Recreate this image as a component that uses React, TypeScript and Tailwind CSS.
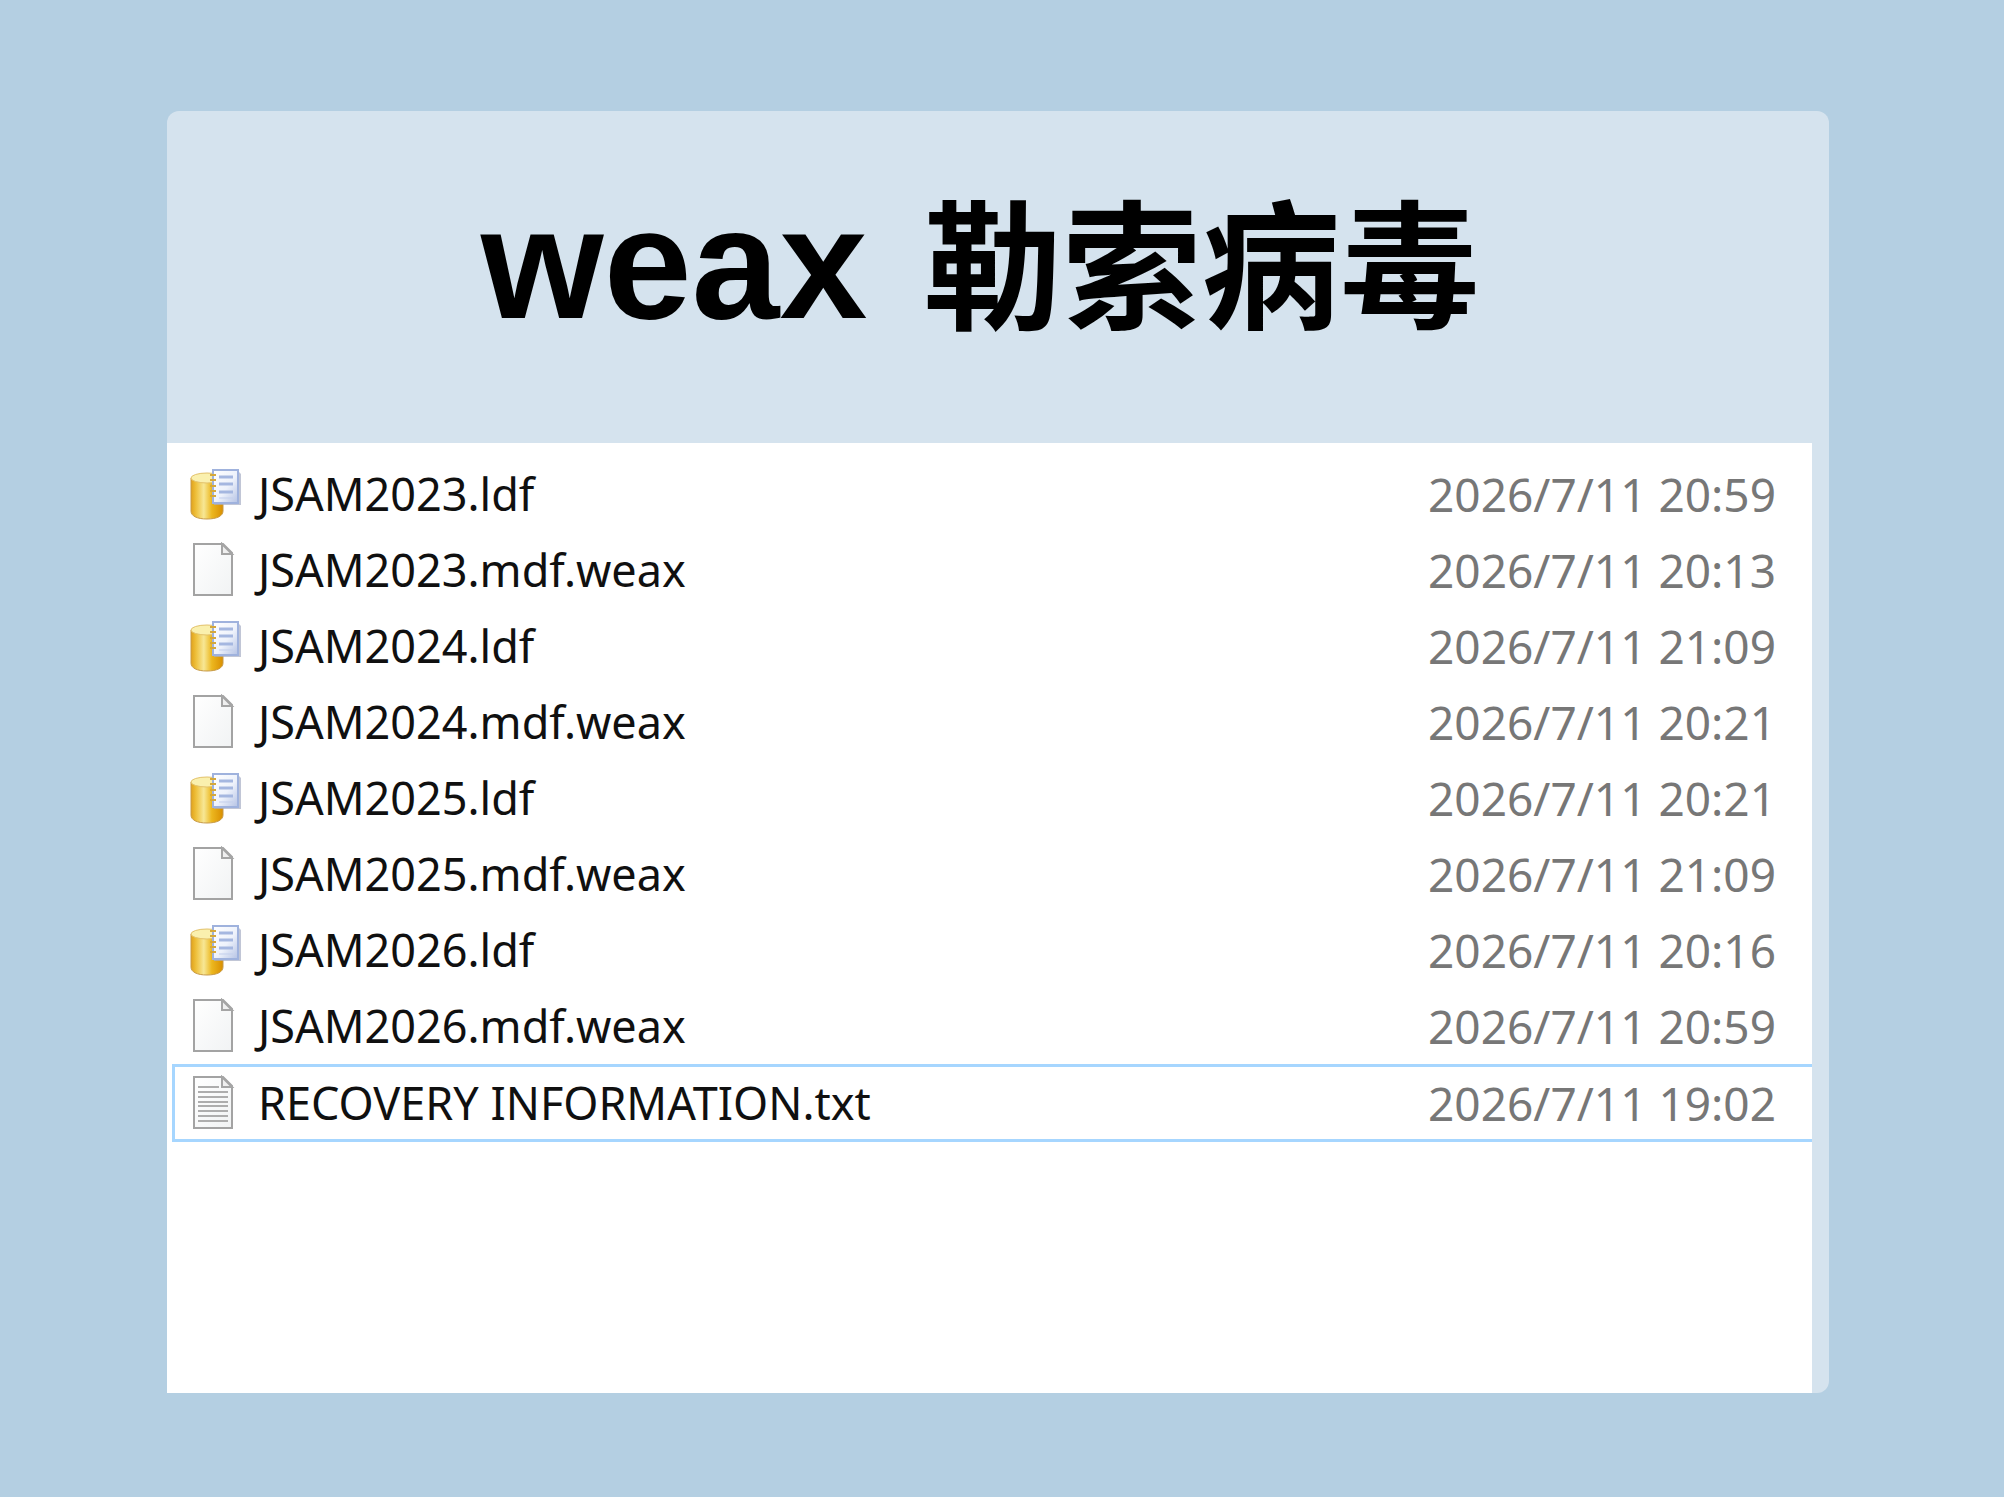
import React from 'react'
import clsx from 'clsx'

type FileKind = 'log' | 'blank' | 'text'

interface FileEntry {
  name: string
  modified: string
  kind: FileKind
  focused?: boolean
}

const files: FileEntry[] = [
  { name: 'JSAM2023.ldf', modified: '2026/7/11 20:59', kind: 'log' },
  { name: 'JSAM2023.mdf.weax', modified: '2026/7/11 20:13', kind: 'blank' },
  { name: 'JSAM2024.ldf', modified: '2026/7/11 21:09', kind: 'log' },
  { name: 'JSAM2024.mdf.weax', modified: '2026/7/11 20:21', kind: 'blank' },
  { name: 'JSAM2025.ldf', modified: '2026/7/11 20:21', kind: 'log' },
  { name: 'JSAM2025.mdf.weax', modified: '2026/7/11 21:09', kind: 'blank' },
  { name: 'JSAM2026.ldf', modified: '2026/7/11 20:16', kind: 'log' },
  { name: 'JSAM2026.mdf.weax', modified: '2026/7/11 20:59', kind: 'blank' },
  { name: 'RECOVERY INFORMATION.txt', modified: '2026/7/11 19:02', kind: 'text', focused: true }
]

// Yellow database cylinder with a notebook page in front
function LogFileIcon() {
  return (
    <svg viewBox="0 0 52 56" className="w-[52px] h-14" aria-hidden="true">
      <defs>
        <linearGradient id="cylinder" x1="0" x2="1" y1="0" y2="0">
          <stop offset="0" stopColor="#e0a21c" />
          <stop offset="0.15" stopColor="#eebf3a" />
          <stop offset="0.4" stopColor="#f7e795" />
          <stop offset="0.65" stopColor="#ecb71f" />
          <stop offset="1" stopColor="#d98f00" />
        </linearGradient>
        <linearGradient id="notebook" x1="0" x2="1" y1="0" y2="1">
          <stop offset="0" stopColor="#ffffff" />
          <stop offset="0.55" stopColor="#eef2fb" />
          <stop offset="1" stopColor="#b4c2e4" />
        </linearGradient>
      </defs>
      <path d="M1 12v33c0 5 6 8 16 8s16-3 16-8V12z" fill="url(#cylinder)" stroke="#c79a48" strokeWidth="1" />
      <ellipse cx="17" cy="12" rx="16" ry="5" fill="#faf0ae" stroke="#e3c26c" strokeWidth="1" />
      <path d="M24 37h25V6l2 2v31H24z" fill="#a7aec4" opacity="0.7" />
      <rect x="23" y="4" width="25" height="33" fill="url(#notebook)" stroke="#9fb2dd" strokeWidth="2" />
      <path d="M29 11h14M29 18h14M29 26h14" stroke="#a5b7e0" strokeWidth="3" />
      <path d="M29 32h14" stroke="#c3cfec" strokeWidth="1" />
      <path d="M20 9h6M20 14h6M20 20h6M20 25h6M20 30h6" stroke="#d4a83c" strokeWidth="2" />
    </svg>
  )
}

function PageIcon({ lined = false }: { lined?: boolean }) {
  return (
    <svg viewBox="0 0 52 56" className="w-[52px] h-14" aria-hidden="true">
      <defs>
        <linearGradient id="sheet" x1="0" x2="1" y1="0" y2="1">
          <stop offset="0" stopColor="#ffffff" />
          <stop offset="1" stopColor="#f1f3f4" />
        </linearGradient>
      </defs>
      <path d="M4 2h29l9 9v42H4z" fill="url(#sheet)" stroke="#a3a3a3" strokeWidth="2" />
      <path d="M32 2v10h10z" fill="#efefef" stroke="#a5a5a5" strokeWidth="2" />
      {lined && (
        <path
          d="M8 12h21M8 17h30M8 22h30M8 27h30M8 31h30M8 36h30M8 41h30M8 46h30"
          stroke="#adadad"
          strokeWidth="2"
        />
      )}
    </svg>
  )
}

function FileIcon({ kind }: { kind: FileKind }) {
  if (kind === 'log') return <LogFileIcon />
  return <PageIcon lined={kind === 'text'} />
}

export default function App() {
  return (
    <main className="min-h-screen bg-[#b4cfe2] pt-[111px] pr-[175px] pb-[104px] pl-[167px]">
      <section className="flex flex-col min-h-[1282px] rounded-xl bg-[#d5e3ee]">
        <h1 className="flex h-[332px] items-baseline justify-center gap-14 pt-[62px] pr-9 font-bold text-black leading-none">
          <span className="font-['Liberation_Sans',sans-serif] text-[158px] leading-[180px]">weax</span>
          <span className="font-['Liberation_Sans','Noto_Sans_CJK_SC',sans-serif] text-[139px] leading-[180px]">勒索病毒</span>
        </h1>

        <div className="flex-1 mr-[17px] pt-[13px] pl-[5px] bg-white">
          <ul className="font-['Noto_Sans',sans-serif] text-[45px] leading-[72px]">
            {files.map(file => (
              <li
                key={file.name}
                className={clsx(
                  'flex h-[76px] items-center justify-between border-3 border-r-0 pl-[15px] pr-9',
                  file.focused ? 'h-[78px] border-[#a6d6ff]' : 'h-[76px] border-transparent'
                )}
              >
                <div className="flex items-center gap-4">
                  <FileIcon kind={file.kind} />
                  <span className="text-[#101010]">{file.name}</span>
                </div>
                <time className="text-[46px] text-[#777777]">{file.modified}</time>
              </li>
            ))}
          </ul>
        </div>
      </section>
    </main>
  )
}
